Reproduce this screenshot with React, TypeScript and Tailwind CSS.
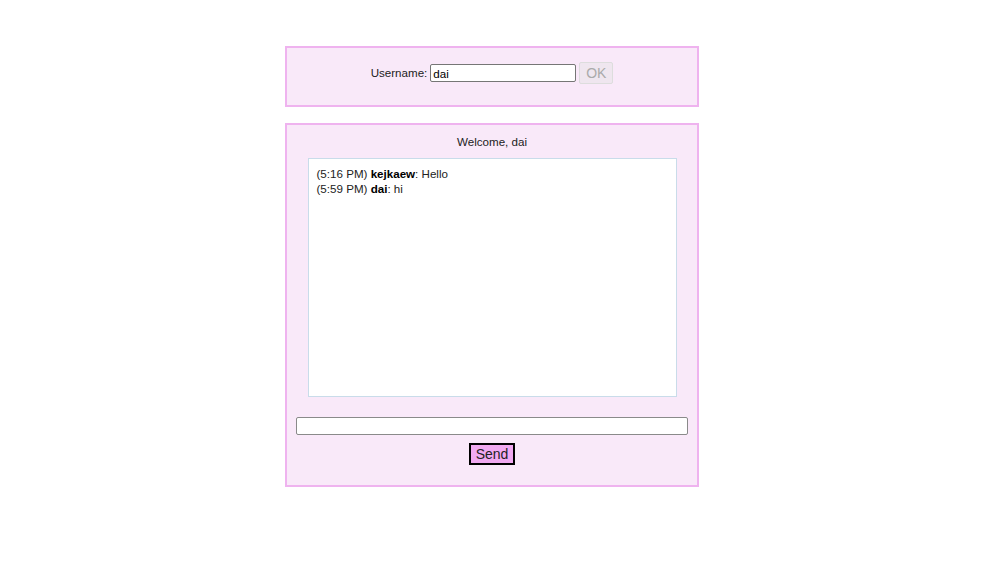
import React from "react";

export default function App() {
  return (
    <div className="w-[1000px] h-[562px] bg-white" style={{ fontFamily: '"Liberation Sans", Arial, sans-serif' }}>
      <div className="w-[984px] pt-[46px]">
        <div className="mx-auto w-[414px] h-[61px] border-2 border-[#efb3ef] bg-[#f9e9f9] pt-[14px] text-[11.6px] text-[#222]">
          <div className="flex items-center justify-center h-[22px]">
            <span className="mr-[3px]">Username:</span>
            <input
              defaultValue="dai"
              className="w-[146px] h-[18px] border border-[#767676] bg-white px-[2px] text-[11.6px] text-black outline-none rounded-[2px]"
            />
            <button className="ml-[3px] w-[34px] h-[22px] border border-[#ddd] bg-[#efe6ef] text-[#aaa] text-[14px] rounded-[2px]">
              OK
            </button>
          </div>
        </div>
        <div className="mx-auto mt-[16px] w-[414px] h-[364px] border-2 border-[#efb3ef] bg-[#f9e9f9] flex flex-col items-center text-[11.6px] text-[#222]">
          <div className="mt-[9px] h-[15px] leading-[15px]">Welcome, dai</div>
          <div className="mt-[9px] w-[369px] h-[239px] border border-[#c9dcea] bg-white pl-[8px] pt-[7px] text-[11.6px] leading-[15px] text-[#222]">
            <div>
              (5:16 PM) <b className="text-black">kejkaew</b>: Hello
            </div>
            <div>
              (5:59 PM) <b className="text-black">dai</b>: hi
            </div>
          </div>
          <input className="mt-[20px] w-[392px] h-[18px] border border-[#8a8a8a] bg-white rounded-[2px] outline-none" />
          <button className="mt-[8px] w-[46px] h-[22px] border-2 border-black bg-[#f1a9f1] text-[14px] text-[#222] leading-none">
            Send
          </button>
        </div>
      </div>
    </div>
  );
}
